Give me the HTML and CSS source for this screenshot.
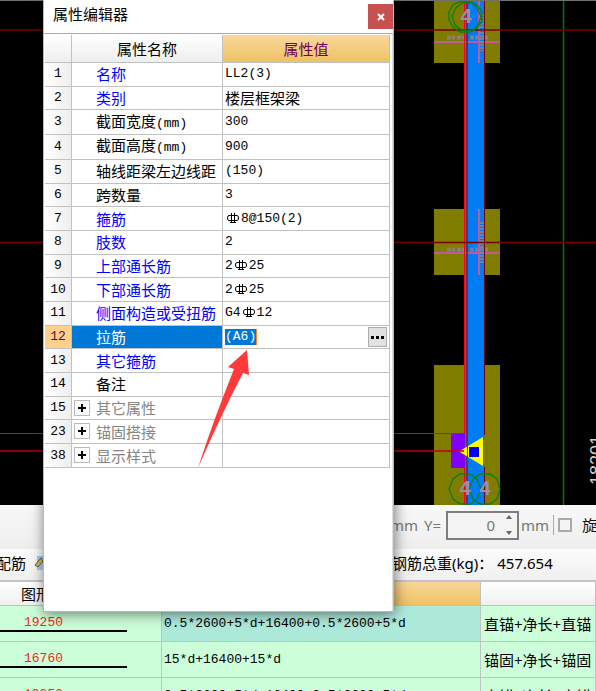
FILE: index.html
```html
<!DOCTYPE html>
<html lang="zh-CN">
<head>
<meta charset="utf-8">
<meta name="viewport" content="width=device-width, initial-scale=1">
<title>属性编辑器</title>
<link rel="stylesheet" href="styles.css">
</head>
<body>
<svg class="defs" aria-hidden="true">
  <symbol id="rebar" viewBox="0 0 14 14">
    <path d="M3 4.500H11Q12.500 4.500 12.500 7T11 9.500H3Q1.500 9.500 1.500 7T3 4.500ZM5.500 2V12M8.500 2V12M4 11.500H10" fill="none" stroke="currentColor"/>
  </symbol>
</svg>
<main class="app">
  <svg class="canvas" viewBox="0 0 596 505" preserveAspectRatio="xMidYMid slice" role="img" aria-label="梁平面图">
    <rect width="596" height="505" fill="#000"/>
    <g fill="#7f7c00">
      <rect x="434" y="0" width="66" height="63"/>
      <rect x="434" y="209" width="66" height="66"/>
      <rect x="434" y="365" width="66" height="140"/>
    </g>
    <rect x="465" y="0" width="19" height="505" fill="#007cf5"/>
    <path d="M563.500 0V505" stroke="#007800" stroke-width="1.500"/>
    <g fill="none" stroke="#c05a9c" stroke-width="2">
      <path d="M434 42H500M434 253H500M479 0V63M479 209V275"/>
    </g>
    <g fill="none" stroke="#8b8788" stroke-width="4" stroke-dasharray="4 1 3 2" opacity=".75">
      <path d="M447 37.500H468M470 37.500H489M447 249.500H468M470 249.500H489"/>
      <path d="M482 14V51M482 222V263" stroke-dasharray="2 1"/>
    </g>
    <path d="M464.500 0V434M464.500 467V505" stroke="#ff0010"/>
    <path d="M467 0V505" stroke="#68304f" stroke-width="2"/>
    <path d="M484.500 0V435M484.500 467V505" stroke="#780014"/>
    <path d="M0 30H596M0 242.500H596" stroke="#780000" stroke-width="1.500"/>
    <rect x="451" y="434" width="14" height="34" fill="#7f00ff"/>
    <path d="M0 433.500H465" stroke="#f00" stroke-width="1.200"/>
    <path d="M459 451.500L483 437V466Z" fill="#ff0"/>
    <path d="M0 451H464" stroke="#c00000" stroke-width="1.500"/>
    <path d="M467.500 444V460" stroke="#7b3c2f"/>
    <rect x="469" y="447" width="10" height="10" fill="#00f"/>
    <g fill="none" stroke="#078314" stroke-width="1.300">
      <path d="M460 1.500L470 1.500 478 6 482 12 482 21 477 28 470 32 460 32 453 27 449 20 449 12 453 5Z"/>
      <path d="M462 3L472 3 478 9 481 17 478 25 472 31 461 30 455 25 452 16 456 8Z"/>
      <path d="M460 474L470 474 477 479 481 489 477 499 470 504 460 504 453 499 449 489 453 479Z"/>
      <path d="M480 474L490 474 497 479 500 489 497 499 490 504 480 504 473 499 469 489 473 479Z"/>
    </g>
    <g class="mark">
      <text x="466" y="23">4</text>
      <text x="465" y="495">4</text>
      <text x="485" y="495">4</text>
    </g>
    <text class="dimension" transform="translate(603 485) rotate(-90)">18201</text>
    <path d="M0 .5H596" stroke="#6c706f"/>
  </svg>

  <form class="offsets">
    <label for="offset-y"><span>mm</span><span>Y=</span></label>
    <span class="spin">
      <input id="offset-y" type="text" value="0">
      <svg viewBox="0 0 8 20" aria-hidden="true"><path d="M1 4L4 0 7 4ZM1 16L4 20 7 16Z"/></svg>
    </span>
    <span>mm</span>
    <span class="divider"></span>
    <label class="rotate"><input type="checkbox">旋转</label>
  </form>

  <div class="summary">
    <span class="command">配筋
      <svg viewBox="0 0 16 16" aria-hidden="true"><path d="M3 1h12v14H3z" fill="#a9c9f5"/><path d="M1 10L7 3 9 6 4 12Z" fill="#d7bd52" stroke="#5d5940"/></svg>
    </span>
    <span class="total"><span>钢筋总重(kg)：</span><span>457.654</span></span>
  </div>

  <table class="bars">
    <colgroup><col class="shape-col"><col class="formula-col"><col></colgroup>
    <thead><tr><th class="shape-head">图形</th><th class="active"></th><th></th></tr></thead>
    <tbody>
      <tr><td class="shape"><span>19250</span></td><td class="formula current">0.5*2600+5*d+16400+0.5*2600+5*d</td><td>直锚+净长+直锚</td></tr>
      <tr><td class="shape"><span>16760</span></td><td class="formula">15*d+16400+15*d</td><td>锚固+净长+锚固</td></tr>
      <tr><td class="shape"><span>19250</span></td><td class="formula">0.5*2600+5*d+16400+0.5*2600+5*d</td><td>直锚+净长+直锚</td></tr>
    </tbody>
  </table>
</main>

<section class="editor" aria-labelledby="editor-title">
  <header><h1 id="editor-title">属性编辑器</h1>
    <button class="close" type="button" aria-label="关闭"><svg viewBox="0 0 8 8" aria-hidden="true"><path d="M1 1L7 7M7 1L1 7"/></svg></button>
  </header>
  <div class="sheet">
    <table class="props">
      <colgroup><col class="num-col"><col class="name-col"><col></colgroup>
      <thead><tr><th></th><th>属性名称</th><th class="active">属性值</th></tr></thead>
      <tbody>
        <tr class="key"><th>1</th><td>名称</td><td>LL2(3)</td></tr>
        <tr class="key"><th>2</th><td>类别</td><td class="cjk">楼层框架梁</td></tr>
        <tr><th>3</th><td>截面宽度<span class="unit">(mm)</span></td><td>300</td></tr>
        <tr><th>4</th><td>截面高度<span class="unit">(mm)</span></td><td>900</td></tr>
        <tr><th>5</th><td>轴线距梁左边线距</td><td>(150)</td></tr>
        <tr><th>6</th><td>跨数量</td><td>3</td></tr>
        <tr class="key"><th>7</th><td>箍筋</td><td><svg class="rebar"><use href="#rebar"/></svg>8@150(2)</td></tr>
        <tr class="key"><th>8</th><td>肢数</td><td>2</td></tr>
        <tr class="key"><th>9</th><td>上部通长筋</td><td>2<svg class="rebar"><use href="#rebar"/></svg>25</td></tr>
        <tr class="key"><th>10</th><td>下部通长筋</td><td>2<svg class="rebar"><use href="#rebar"/></svg>25</td></tr>
        <tr class="key"><th>11</th><td>侧面构造或受扭筋</td><td>G4<svg class="rebar"><use href="#rebar"/></svg>12</td></tr>
        <tr class="selected"><th>12</th><td><label for="tie">拉筋</label></td><td><div class="edit"><input id="tie" type="text" value="(A6)"><button type="button" aria-label="更多"><svg viewBox="0 0 14 4" aria-hidden="true"><path d="M0 1h3v3H0zM5 1h3v3H5zM10 1h3v3h-3z"/></svg></button></div></td></tr>
        <tr class="key"><th>13</th><td>其它箍筋</td><td></td></tr>
        <tr><th>14</th><td>备注</td><td></td></tr>
        <tr class="group"><th>15</th><td><button type="button" aria-label="展开"></button>其它属性</td><td></td></tr>
        <tr class="group"><th>23</th><td><button type="button" aria-label="展开"></button>锚固搭接</td><td></td></tr>
        <tr class="group"><th>38</th><td><button type="button" aria-label="展开"></button>显示样式</td><td></td></tr>
      </tbody>
    </table>
  </div>
</section>
<svg class="pointer" viewBox="0 0 54 120" aria-hidden="true"><path d="M50 1L52 26 46 24Q24 66 1 119Q15 75 37 20L31 18Z"/></svg>
</body>
</html>
```
FILE: styles.css
```css
* { box-sizing: border-box; }

body {
  position: relative;
  height: 100vh;
  margin: 0;
  overflow: hidden;
  background: #fff;
  color: #000;
  font: 15px/20px "Noto Sans", "Noto Sans CJK SC", sans-serif;
}

button, input { margin: 0; padding: 0; font: inherit; }
table { border-collapse: separate; border-spacing: 0; table-layout: fixed; width: 100%; }
.defs { position: absolute; width: 0; height: 0; }

.app { display: flex; flex-direction: column; }
.canvas { display: block; width: 100%; height: 505px; }
.mark { font: bold 20px "Liberation Sans", sans-serif; fill: #9a91a0; text-anchor: middle; }
.dimension { font: 18px "Liberation Sans", sans-serif; fill: #d0d0d0; }

.offsets {
  display: flex;
  align-items: center;
  height: 44px;
  padding: 0 0 4px 390px;
  overflow: hidden;
  background: linear-gradient(#f8f8f8, #eee);
  color: #777;
  white-space: nowrap;
}
.offsets > * { flex: none; }
.offsets > label:first-child { display: flex; gap: 6px; width: 56px; }
.spin {
  display: flex;
  align-items: center;
  width: 73px;
  height: 29px;
  margin-right: 2px;
  padding-right: 4px;
  border: 2px solid #7d7d7d;
  background: #f3f3f3;
}
.spin input { flex: 1; min-width: 0; border: 0; background: none; color: #777; text-align: right; }
.spin svg { width: 8px; height: 20px; margin-left: 10px; fill: #666; }
.divider { width: 1px; height: 20px; margin: 0 4px; background: #aaa; }
.rotate { display: flex; align-items: center; gap: 10px; color: #111; }
.rotate input { appearance: none; width: 14px; height: 14px; border: 2px solid #aaa; background: #f4f4f4; }

.summary {
  display: flex;
  align-items: center;
  height: 33px;
  padding-bottom: 3px;
  border-bottom: 2px solid #c4c4c8;
  background: linear-gradient(#fbfbfb, #f0f0f0);
  white-space: nowrap;
}
.command { display: flex; align-items: center; gap: 8px; width: 396px; margin-left: -4px; }
.command svg { width: 16px; height: 16px; }
.total { display: flex; gap: 4px; }

.shape-col { width: 162px; }
.formula-col { width: 319px; }
.bars th { height: 24px; padding: 0; border: solid #c0c0c0; border-width: 0 1px 1px 0; background: linear-gradient(#fff, #f0f0f0); font-weight: normal; }
.bars .shape-head { padding-left: 21px; text-align: left; }
.bars .active { background: linear-gradient(#f9d79a, #f0c164); }
.bars td {
  height: 36px;
  padding: 0 3px;
  border: solid #bfc4c1;
  border-width: 0 1px 1px 0;
  background: #ccffd9;
  white-space: nowrap;
}
.bars .formula { padding: 0 2px; font: 13px/20px "Liberation Mono", monospace; }
.bars .current { background: #aeeada; }
.bars .shape { padding: 0 34px 0 0; color: #f22; font: 13px/14px "Liberation Mono", monospace; }
.shape span { display: block; padding-left: 24px; border-bottom: 2px solid #000; }

.editor {
  position: absolute;
  top: 0;
  left: 43px;
  display: flex;
  flex-direction: column;
  width: 351px;
  height: 612px;
  border: solid #b8b8bc;
  border-width: 0 1px 1px;
  background: #fff;
  box-shadow: 1px 2px 13px rgb(0 0 0 / 50%);
}
.editor header { display: flex; align-items: center; justify-content: space-between; height: 33px; padding-left: 9px; }
.editor h1 { margin: 0 0 5px; font-size: 15px; font-weight: normal; }
.close { display: grid; place-items: center; width: 25px; height: 25px; border: 0; background: #c75050; }
.close svg { width: 8px; height: 8px; fill: none; stroke: #fff; stroke-width: 2; }
.sheet { flex: 1; padding: 1px 2px 0 1px; border-top: 1px solid #aaaaae; border-right: 1px solid #ddd; }

.props { height: 433px; }
.num-col { width: 27px; }
.name-col { width: 151px; }
.props th, .props td {
  height: 23px;
  padding: 0 2px;
  border: solid #c1c1c1;
  border-width: 0 1px 1px 0;
  line-height: 20px;
  white-space: nowrap;
}
.props thead th { height: 28px; background: linear-gradient(#fff, #eee); font-weight: normal; }
.props thead .active { background: linear-gradient(#f9d79d, #f0c164); color: #6b005c; }
.props tbody th { background: linear-gradient(90deg, #fff, #eee); font: 13px/20px "Liberation Mono", monospace; }
.props td:nth-child(2) { position: relative; padding-left: 24px; padding-right: 0; }
.props td:last-child { font: 13px/20px "Liberation Mono", monospace; }
.props td.cjk:last-child { font: 15px/20px "Noto Sans CJK SC", sans-serif; }
.unit { font: 13px/20px "Liberation Mono", monospace; }
.key td:nth-child(2) { color: #00f; }
.group td { color: #858585; }
.rebar { width: 14px; height: 14px; margin: 0 1px; vertical-align: -3px; }

.props .selected th { background: #ffd18a; color: #6b005c; }
.props .selected td:nth-child(2) { background: #0078d7; color: #fff; }
.edit { display: flex; align-items: center; justify-content: space-between; }
.edit input { width: 32px; height: 16px; border: 0; border-right: 1px solid #ff8728; background: #0078d7; color: #fff; }
.edit button { display: grid; place-items: center; width: 19px; height: 20px; border: 1px solid #adadad; background: #e1e1e1; }
.edit svg { width: 14px; height: 4px; }

.group button {
  position: absolute;
  top: 3px;
  left: 2px;
  width: 16px;
  height: 16px;
  border: 1px solid #bbb;
  background:
    linear-gradient(#000, #000) center / 8px 2px no-repeat,
    linear-gradient(#000, #000) center / 2px 8px no-repeat,
    #fff;
}

.pointer { position: absolute; top: 349px; left: 197px; width: 54px; height: 120px; fill: #ff3a3a; }
```
